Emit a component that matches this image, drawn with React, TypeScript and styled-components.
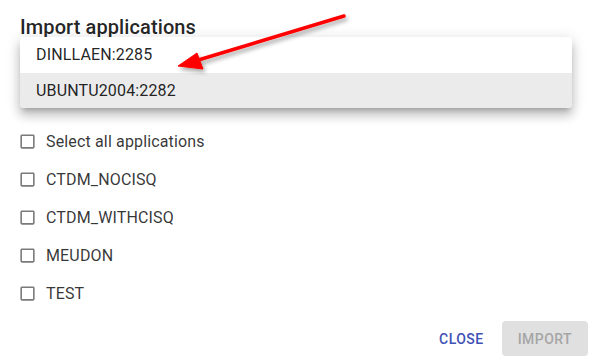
import React from "react";
import styled, { createGlobalStyle } from "styled-components";

const Global = createGlobalStyle`
  html, body { margin: 0; padding: 0; background: #fff; }
  body { font-family: Roboto, "Liberation Sans", sans-serif; }
`;

const Dialog = styled.div`
  position: relative;
  width: 594px;
  height: 364px;
  box-sizing: border-box;
  padding: 14px 0 0 0;
  display: flex;
  flex-direction: column;
  overflow: hidden;
`;

const Title = styled.h2`
  margin: 0;
  padding: 0 20px;
  font-size: 20px;
  font-weight: 500;
  line-height: 26px;
  color: rgba(0, 0, 0, 0.87);
  letter-spacing: 0.1px;
`;

const FieldArea = styled.div`
  position: relative;
  height: 82.5px;
  margin: 0 20px;
`;

const Menu = styled.ul`
  position: absolute;
  top: -3px;
  left: 0;
  width: 552px;
  margin: 0;
  padding: 0;
  list-style: none;
  background: #fff;
  border-radius: 4px;
  overflow: hidden;
  box-shadow: 0px 5px 5px -3px rgba(0,0,0,0.2), 0px 8px 10px 1px rgba(0,0,0,0.14), 0px 3px 14px 2px rgba(0,0,0,0.12);
  z-index: 2;
`;

const MenuItem = styled.li<{ $selected?: boolean }>`
  height: 35.5px;
  display: flex;
  align-items: center;
  padding: 0 16px;
  font-size: 16px;
  color: rgba(0, 0, 0, 0.87);
  background: ${(p) => (p.$selected ? "#ebebeb" : "#fff")};
  letter-spacing: 0.15px;
`;

const List = styled.div`
  display: flex;
  flex-direction: column;
  padding: 0 0 0 18px;
`;

const Row = styled.label`
  display: flex;
  align-items: center;
  height: 37.9px;
  gap: 9px;
  font-size: 16px;
  color: rgba(0, 0, 0, 0.8);
  letter-spacing: 0.15px;
`;

const Box = styled.svg`
  width: 19px;
  height: 19px;
  fill: #7a7a7a;
  flex: none;
`;

const Actions = styled.div`
  margin-top: auto;
  display: flex;
  justify-content: flex-end;
  align-items: center;
  gap: 2px;
  padding: 0 6px 8px 0;
`;

const Button = styled.button<{ $disabled?: boolean }>`
  height: 35px;
  min-width: 64px;
  padding: 0 16px;
  border: none;
  border-radius: 4px;
  font-family: Roboto, "Liberation Sans", sans-serif;
  font-size: 14px;
  font-weight: 500;
  letter-spacing: 0.45px;
  text-transform: uppercase;
  background: ${(p) => (p.$disabled ? "#e0e0e0" : "transparent")};
  color: ${(p) => (p.$disabled ? "#a6a6a6" : "#3f51b5")};
`;

const Arrow = styled.svg`
  position: absolute;
  left: 0;
  top: 0;
  width: 594px;
  height: 364px;
  pointer-events: none;
  z-index: 3;
`;

const items = ["Select all applications", "CTDM_NOCISQ", "CTDM_WITHCISQ", "MEUDON", "TEST"];

export default function App() {
  return (
    <>
      <Global />
      <Dialog>
        <Title>Import applications</Title>
        <FieldArea>
          <Menu>
            <MenuItem>DINLLAEN:2285</MenuItem>
            <MenuItem $selected>UBUNTU2004:2282</MenuItem>
          </Menu>
        </FieldArea>
        <List>
          {items.map((t) => (
            <Row key={t}>
              <Box viewBox="0 0 24 24">
                <path d="M19 5v14H5V5h14m0-2H5c-1.11 0-2 .9-2 2v14c0 1.1.89 2 2 2h14c1.1 0 2-.9 2-2V5c0-1.1-.9-2-2-2z" />
              </Box>
              {t}
            </Row>
          ))}
        </List>
        <Actions>
          <Button>Close</Button>
          <Button $disabled>Import</Button>
        </Actions>
        <Arrow viewBox="0 0 594 364">
          <defs>
            <filter id="sh" x="-20%" y="-20%" width="140%" height="140%">
              <feDropShadow dx="2" dy="3" stdDeviation="2" floodColor="#000" floodOpacity="0.35" />
            </filter>
          </defs>
          <g filter="url(#sh)" fill="#f00" stroke="#f00">
            <line x1="344" y1="16" x2="195" y2="61" strokeWidth="3.5" strokeLinecap="round" />
            <polygon points="178,66 197,53 203,69" strokeWidth="1" strokeLinejoin="round" />
          </g>
        </Arrow>
      </Dialog>
    </>
  );
}
